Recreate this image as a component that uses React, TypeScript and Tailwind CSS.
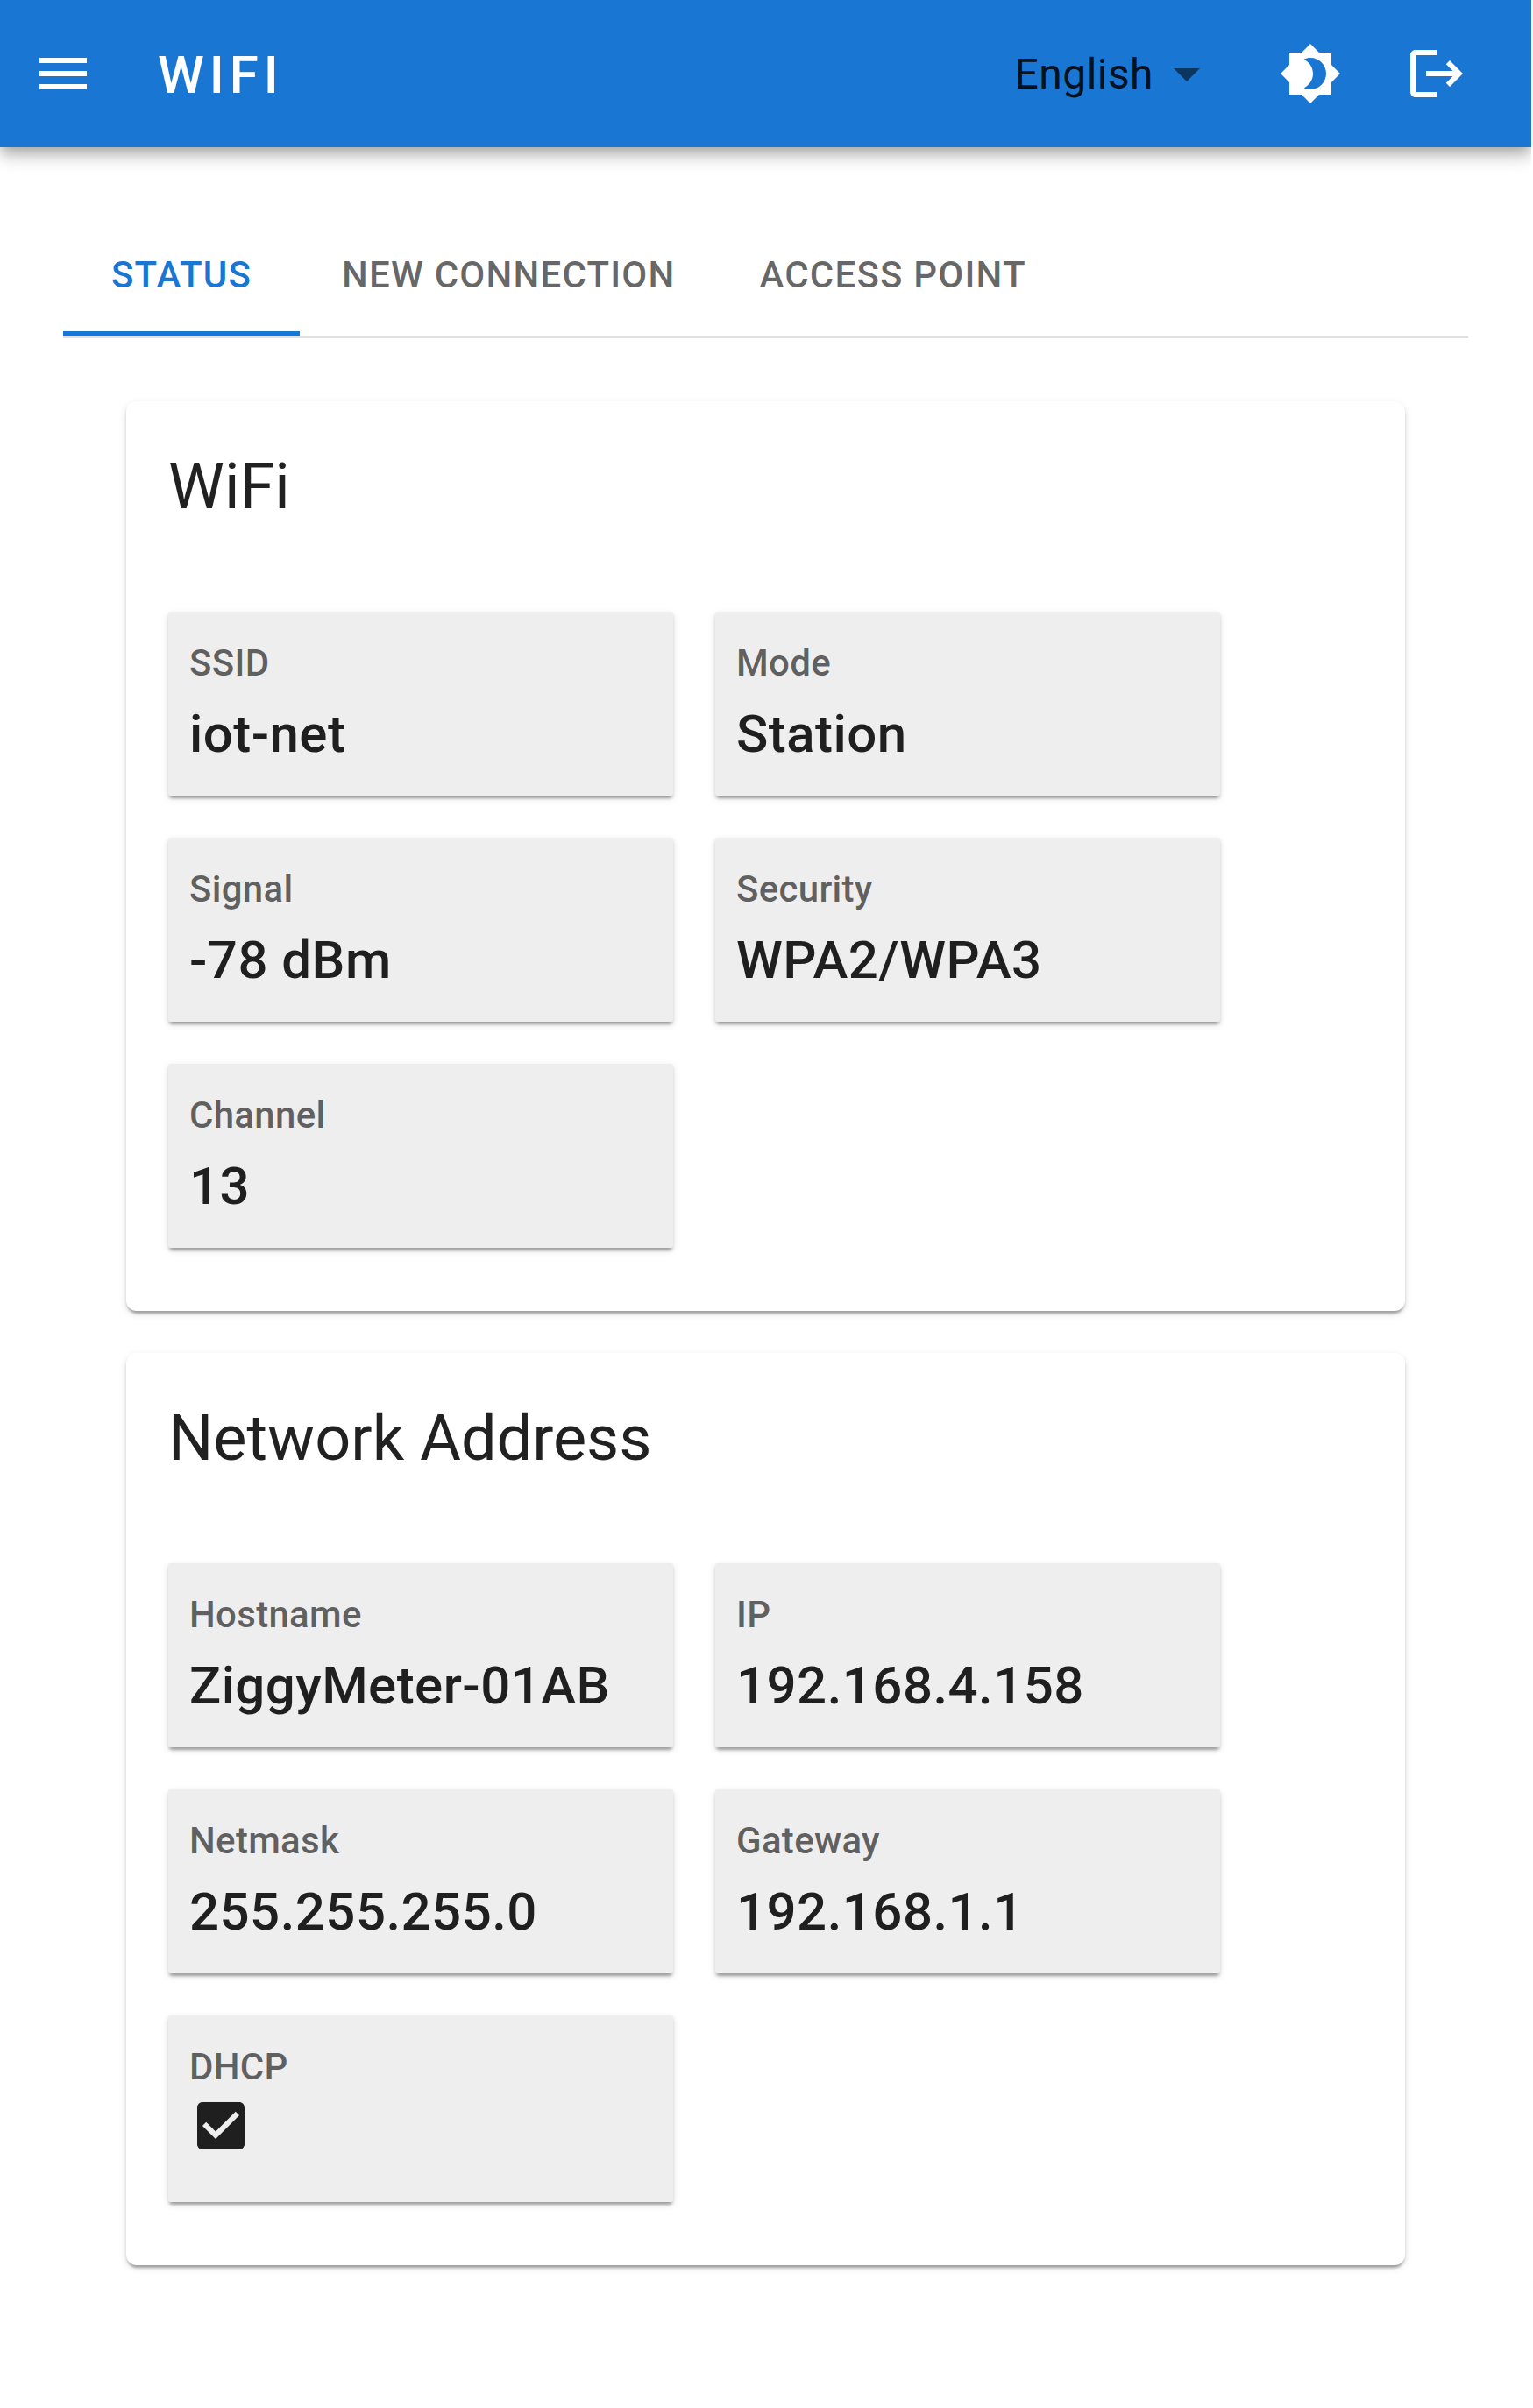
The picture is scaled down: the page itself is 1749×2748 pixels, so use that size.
import React, { ReactNode, useState } from 'react';

interface Field {
  label: string;
  value: ReactNode;
}

interface IconProps {
  path: string;
  className?: string;
}

const icons = {
  menu: 'M3 18h18v-2H3v2zm0-5h18v-2H3v2zm0-7v2h18V6H3z',
  dropDown: 'm7 10 5 5 5-5z',
  brightness:
    'M20 8.69V4h-4.69L12 .69 8.69 4H4v4.69L.69 12 4 15.31V20h4.69L12 23.31 15.31 20H20v-4.69L23.31 12 20 8.69zM12 18c-.89 0-1.74-.2-2.5-.55C11.56 16.5 13 14.42 13 12s-1.44-4.5-3.5-5.45C10.26 6.2 11.11 6 12 6c3.31 0 6 2.69 6 6s-2.69 6-6 6z',
  logout:
    'm17 7-1.41 1.41L18.17 11H8v2h10.17l-2.58 2.58L17 17l5-5zM4 5h8V3H4c-1.1 0-2 .9-2 2v14c0 1.1.9 2 2 2h8v-2H4V5z',
  checkBox:
    'M19 3H5c-1.11 0-2 .9-2 2v14c0 1.1.89 2 2 2h14c1.11 0 2-.9 2-2V5c0-1.1-.89-2-2-2zm-9 14-5-5 1.41-1.41L10 14.17l7.59-7.59L19 8l-9 9z',
};

const Icon: React.FC<IconProps> = ({ path, className = '' }) => (
  <svg viewBox="0 0 24 24" fill="currentColor" className={`size-[72px] shrink-0 ${className}`}>
    <path d={path} />
  </svg>
);

const wifiFields: Field[] = [
  { label: 'SSID', value: 'iot-net' },
  { label: 'Mode', value: 'Station' },
  { label: 'Signal', value: '-78 dBm' },
  { label: 'Security', value: 'WPA2/WPA3' },
  { label: 'Channel', value: '13' },
];

const networkFields: Field[] = [
  { label: 'Hostname', value: 'ZiggyMeter-01AB' },
  { label: 'IP', value: '192.168.4.158' },
  { label: 'Netmask', value: '255.255.255.0' },
  { label: 'Gateway', value: '192.168.1.1' },
  {
    label: 'DHCP',
    value: (
      <div className="-mt-0.5 h-[101px]">
        <Icon path={icons.checkBox} />
      </div>
    ),
  },
];

const tabs = ['Status', 'New connection', 'Access point'];

const Header = () => (
  <header className="relative flex h-[168px] items-center bg-[#1976d2] pr-[72px] pl-9 text-white shadow-[0_6px_12px_-3px_rgba(0,0,0,0.2),0_12px_15px_0_rgba(0,0,0,0.14),0_3px_30px_0_rgba(0,0,0,0.12)]">
    <button aria-label="Open menu">
      <Icon path={icons.menu} />
    </button>
    <h1 className="ml-[72px] grow pt-1 text-[60px] leading-[96px] font-medium tracking-[6px] uppercase">WiFi</h1>
    <button className="flex items-center text-[48px] tracking-[0.45px] text-black/87">
      <span className="pt-0.5 leading-[70px]">English</span>
      <Icon path={icons.dropDown} className="ml-0.5 text-black/54" />
    </button>
    <button aria-label="Toggle theme" className="ml-[69px]">
      <Icon path={icons.brightness} />
    </button>
    <button aria-label="Log out" className="ml-[72px]">
      <Icon path={icons.logout} />
    </button>
  </header>
);

const FieldTile: React.FC<Field> = ({ label, value }) => (
  <div className="rounded-[2px] bg-[#eeeeee] px-6 pt-[26px] pb-[22px] shadow-[0_6px_3px_-3px_rgba(0,0,0,0.2),0_3px_3px_0_rgba(0,0,0,0.14),0_3px_9px_0_rgba(0,0,0,0.12)]">
    <div className="text-[42px] leading-[66px] font-medium tracking-[0.3px] text-black/60">{label}</div>
    <div className="text-[60px] leading-[96px] font-medium tracking-[0.45px] text-black/87">{value}</div>
  </div>
);

const Section: React.FC<{ title: string; fields: Field[] }> = ({ title, fields }) => (
  <section className="rounded-xl bg-white px-12 pt-[50px] pb-[72px] shadow-[0_6px_3px_-3px_rgba(0,0,0,0.2),0_3px_3px_0_rgba(0,0,0,0.14),0_3px_9px_0_rgba(0,0,0,0.12)]">
    <h2 className="text-[72px] leading-[96px] text-black/87">{title}</h2>
    <div className="mt-[94px] grid grid-cols-[576px_576px] gap-12">
      {fields.map((field) => (
        <FieldTile key={field.label} {...field} />
      ))}
    </div>
  </section>
);

export default function App() {
  const [activeTab, setActiveTab] = useState(tabs[0]);

  return (
    <div className="min-h-[2748px] w-[1747px] overflow-hidden bg-white font-[Roboto,sans-serif]">
      <Header />
      <main className="p-[72px]">
        <nav className="flex h-[146px] border-b-2 border-black/12">
          {tabs.map((tab) => (
            <button
              key={tab}
              onClick={() => setActiveTab(tab)}
              className={`h-36 min-w-[270px] border-b-6 px-12 pt-2.5 text-[42px] leading-[52px] font-medium tracking-[1.2px] uppercase ${
                tab === activeTab ? 'border-[#1976d2] text-[#1976d2]' : 'border-transparent text-black/60'
              }`}
            >
              {tab}
            </button>
          ))}
        </nav>
        <div className="flex flex-col gap-12 p-[72px]">
          <Section title="WiFi" fields={wifiFields} />
          <Section title="Network Address" fields={networkFields} />
        </div>
      </main>
    </div>
  );
}
